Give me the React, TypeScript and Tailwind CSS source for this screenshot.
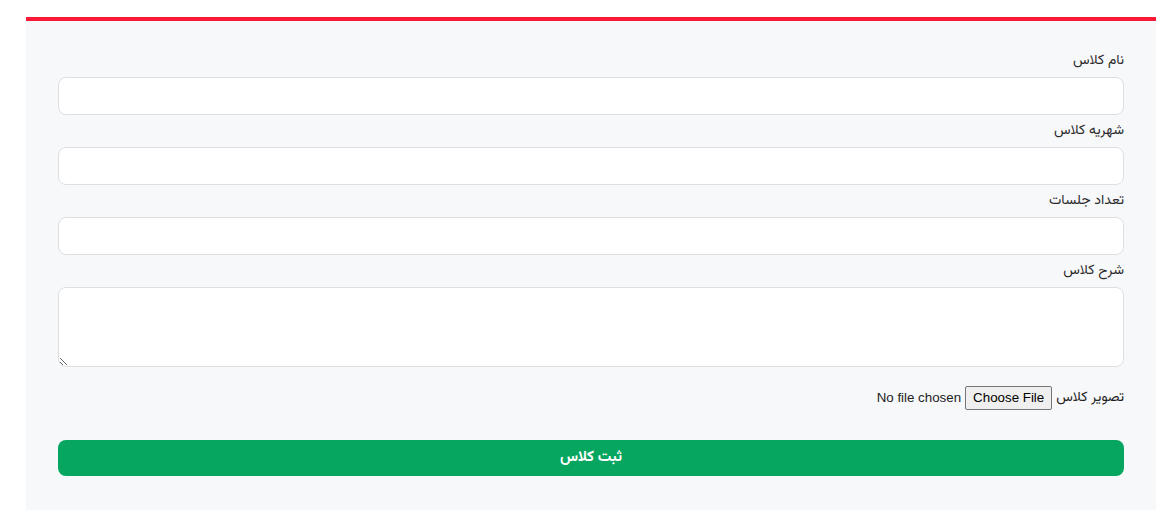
import React from "react";

const fa = { fontFamily: '"Vazirmatn", "DejaVu Sans", "Noto Sans", sans-serif' };

function Field({ label, area }: { label: string; area?: boolean }) {
  return (
    <div className="mb-1 flex flex-col">
      <label className="mb-1 h-6 text-right text-[14px] leading-6 text-[#2a2a2a]" style={fa}>
        {label}
      </label>
      {area ? (
        <textarea dir="rtl" className="h-[80px] w-full rounded-lg border border-[#dddfe3] bg-white" />
      ) : (
        <input dir="rtl" className="h-[38px] w-full rounded-lg border border-[#dddfe3] bg-white" />
      )}
    </div>
  );
}

export default function App() {
  return (
    <div className="min-h-[523px] bg-white pt-[17px]">
      <div className="ml-[26px] w-[1130px] border-t-4 border-[#fa1a38] bg-[#f7f8fa] px-8 pb-[34px] pt-[28px]" dir="rtl">
        <Field label="نام کلاس" />
        <Field label="شهریه کلاس" />
        <Field label="تعداد جلسات" />
        <Field label="شرح کلاس" area />
        <div className="mt-[19px] flex h-6 items-center gap-1">
          <span className="text-[14px] text-[#222]" style={fa}>تصویر کلاس</span>
          <input
            type="file"
            className="text-[13.33px] text-[#222] [font-family:Arial,'Liberation_Sans',sans-serif] file:me-[4px] file:rounded-[2px] file:border file:border-[#767676] file:bg-[#efefef] file:px-[7px] file:py-[1px] file:text-[13.33px] file:text-black"
          />
        </div>
        <button
          className="mt-[30px] h-9 w-full rounded-lg bg-[#06a560] text-[15px] font-bold text-white"
          style={fa}
        >
          ثبت کلاس
        </button>
      </div>
    </div>
  );
}
